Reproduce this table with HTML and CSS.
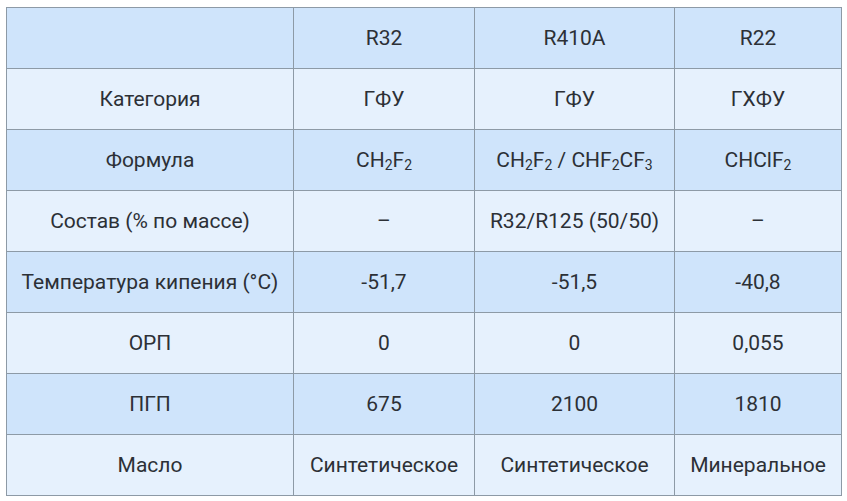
FILE: index.html
```html
<!DOCTYPE html>
<html>
<head>
<meta charset="utf-8">
<link rel="stylesheet" href="styles.css">
</head>
<body>
<table class="tbl">
  <colgroup>
    <col class="c1"><col class="c2"><col class="c3"><col class="c4">
  </colgroup>
  <tr class="dark"><td></td><td>R32</td><td>R410A</td><td>R22</td></tr>
  <tr class="light"><td>Категория</td><td>ГФУ</td><td>ГФУ</td><td>ГХФУ</td></tr>
  <tr class="dark"><td>Формула</td><td>CH<sub>2</sub>F<sub>2</sub></td><td>CH<sub>2</sub>F<sub>2</sub> / CHF<sub>2</sub>CF<sub>3</sub></td><td>CHClF<sub>2</sub></td></tr>
  <tr class="light"><td>Состав (% по массе)</td><td>–</td><td>R32/R125 (50/50)</td><td>–</td></tr>
  <tr class="dark"><td>Температура кипения (°C)</td><td>-51,7</td><td>-51,5</td><td>-40,8</td></tr>
  <tr class="light"><td>ОРП</td><td>0</td><td>0</td><td>0,055</td></tr>
  <tr class="dark"><td>ПГП</td><td>675</td><td>2100</td><td>1810</td></tr>
  <tr class="light"><td>Масло</td><td>Синтетическое</td><td>Синтетическое</td><td>Минеральное</td></tr>
</table>
</body>
</html>
```
FILE: styles.css
```css
html, body { margin: 0; padding: 0; background: #fff; }
body { padding: 7px 0 0 6px; }
.tbl {
  border-collapse: collapse;
  table-layout: fixed;
  width: 835px;
  font-family: Roboto, "Liberation Sans", sans-serif;
  font-size: 21px;
  color: #2c3036;
}
.c1 { width: 287px; }
.c2 { width: 181px; }
.c3 { width: 200px; }
.c4 { width: 167px; }
.tbl td {
  border: 1px solid #8d9aa6;
  height: 61px;
  padding: 0;
  text-align: center;
  vertical-align: middle;
  box-sizing: border-box;
}
.dark td { background: #cfe4fb; }
.light td { background: #e6f1fd; }
sub { font-size: 14px; vertical-align: -3px; line-height: 0; }
```
